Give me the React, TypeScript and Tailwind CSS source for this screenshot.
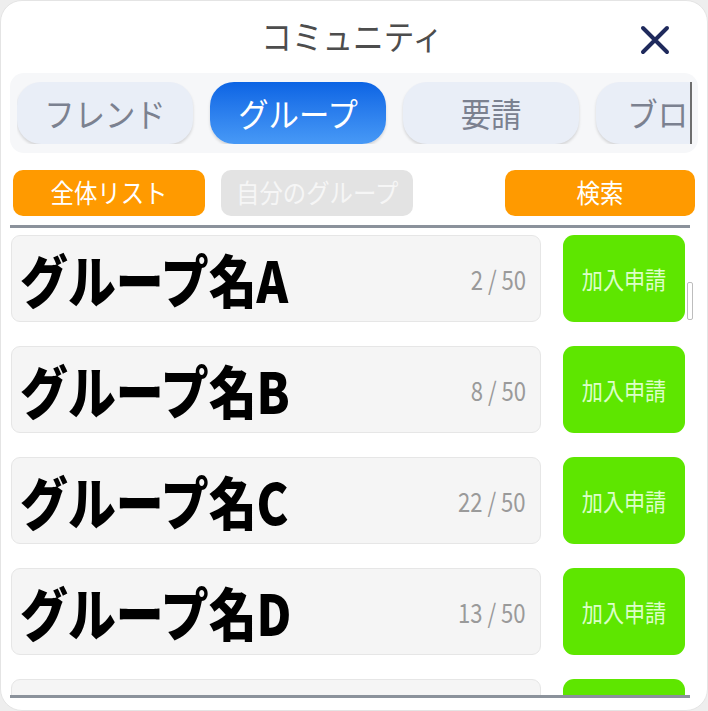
import React from 'react';

const font = "font-['Noto_Sans_CJK_JP','Noto_Sans',sans-serif]";

interface Group {
  name: string;
  members: number;
}

const groups: Group[] = [
  { name: 'グループ名A', members: 2 },
  { name: 'グループ名B', members: 8 },
  { name: 'グループ名C', members: 22 },
  { name: 'グループ名D', members: 13 },
  { name: 'グループ名E', members: 5 },
];

const tabs = ['フレンド', 'グループ', '要請', 'ブロック'];

const GroupRow: React.FC<{ group: Group }> = ({ group }) => (
  <div className="flex shrink-0 gap-[22px] h-[87px]">
    <div className="flex-1 flex items-center justify-between bg-[#f5f5f5] border border-[#e6e6e6] rounded-[9px] pl-[8px] pr-[14px] overflow-hidden">
      <span className="inline-block origin-left scale-x-[0.84] text-[57px] leading-none font-black text-black whitespace-nowrap">
        {group.name}
      </span>
      <span className="inline-block origin-right scale-x-[0.85] text-[26px] text-[#9a9a9a]">
        {group.members} / 50
      </span>
    </div>
    <button className="w-[122px] rounded-[11px] bg-[#5ee600] flex items-center justify-center">
      <span className="inline-block scale-x-[0.88] text-[24px] text-[#dcffc8]">加入申請</span>
    </button>
  </div>
);

export default function App() {
  return (
    <div className={`w-[708px] h-[711px] bg-[#eeeeee] ${font}`}>
      <div className="w-full h-full bg-white rounded-[22px] border border-[#e4e4e4] overflow-hidden flex flex-col">
        {/* header */}
        <div className="relative h-[72px] shrink-0 flex items-center justify-center">
          <span className="inline-block scale-x-[0.9] text-[34px] text-[#4d4d4d] leading-none pb-[2px] pr-[4px]">
            コミュニティ
          </span>
          <button className="absolute right-[37px] top-[24px]">
            <svg width="30" height="30" viewBox="0 0 30 30">
              <path d="M3 3 L27 27 M27 3 L3 27" stroke="#1f2a5c" strokeWidth="4" strokeLinecap="round" />
            </svg>
          </button>
        </div>

        {/* tabs */}
        <div className="mx-[9px] h-[80px] shrink-0 bg-[#f6f7f9] rounded-[14px] flex pl-[7px] pr-[6px]">
          <div className="flex-1 my-[9px] flex items-center gap-[17px] overflow-hidden border-r-2 border-[#6e6e6e]">
            {tabs.map((t, i) => (
              <div
                key={t}
                className={`shrink-0 w-[176px] h-[62px] rounded-[24px] flex items-center justify-center shadow-[0_2px_3px_rgba(0,0,0,0.14)] ${
                  i === 1
                    ? 'bg-linear-to-b from-[#0b64e4] to-[#4799f6] text-white'
                    : 'bg-[#e9eef7] text-[#7b8190]'
                } ${i === 3 ? 'justify-start pl-[26px]' : ''}`}
              >
                <span className="inline-block scale-x-[0.92] text-[33px] leading-none whitespace-nowrap">{t}</span>
              </div>
            ))}
          </div>
        </div>

        {/* filters */}
        <div className="flex gap-[16px] px-[12px] mt-[17px] shrink-0">
          <button className="w-[192px] h-[46px] rounded-[10px] bg-[#ff9a00] text-white">
            <span className="inline-block scale-x-[0.9] text-[26px] leading-none">全体リスト</span>
          </button>
          <button className="w-[192px] h-[46px] rounded-[10px] bg-[#e3e3e3] text-[#f6f6f6]">
            <span className="inline-block scale-x-[0.9] text-[26px] leading-none whitespace-nowrap">自分のグループ</span>
          </button>
          <button className="ml-auto w-[190px] h-[46px] rounded-[10px] bg-[#ff9a00] text-white">
            <span className="inline-block scale-x-[0.9] text-[26px] leading-none">検索</span>
          </button>
        </div>

        {/* list */}
        <div className="relative ml-[9px] mr-[17px] mt-[9px] h-[473px] shrink-0 border-t-[3px] border-b-[3px] border-[#8b929b]">
          <div className="h-full overflow-hidden flex flex-col gap-[24px] pt-[7px] pl-[1px] pr-[5px]">
            {groups.map(g => (
              <GroupRow key={g.name} group={g} />
            ))}
          </div>
          <div className="absolute right-[-3px] top-[54px] w-[6px] h-[38px] border border-[#bdbdbd] rounded-[2px] bg-white" />
        </div>
      </div>
    </div>
  );
}
